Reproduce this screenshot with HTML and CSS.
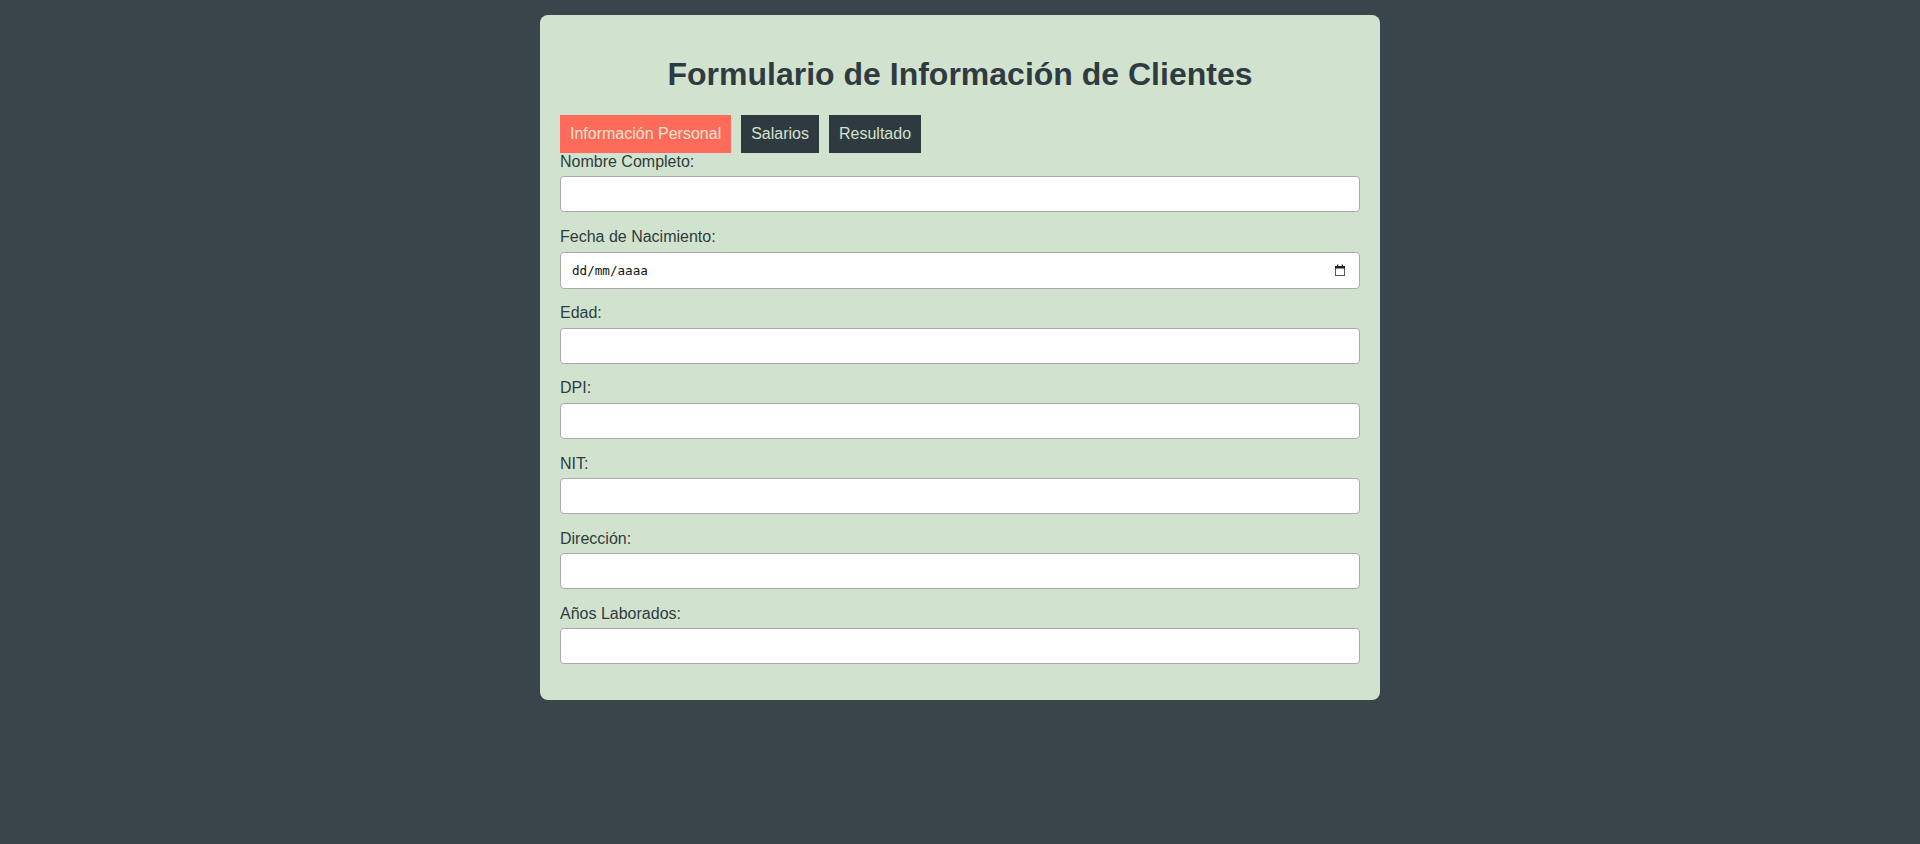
FILE: index.html
```html
<!DOCTYPE html>
<html lang="es">
<head>
<meta charset="utf-8">
<title>Formulario de Información de Clientes</title>
<link rel="stylesheet" href="styles.css">
</head>
<body>
  <div class="container">
    <h1 class="title">Formulario de Información de Clientes</h1>
    <div class="tabs">
      <button class="tab active" type="button">Información Personal</button>
      <button class="tab" type="button">Salarios</button>
      <button class="tab" type="button">Resultado</button>
    </div>
    <form class="form">
      <label class="label" for="nombre">Nombre Completo:</label>
      <input class="field" id="nombre" type="text">

      <label class="label" for="fecha">Fecha de Nacimiento:</label>
      <div class="date-field">
        <input class="field date-input" id="fecha" type="text" placeholder="dd/mm/aaaa">
        <svg class="cal-icon" width="10" height="12" viewBox="0 0 10 12" aria-hidden="true">
          <rect x="0.5" y="2.5" width="9" height="9" fill="none" stroke="#555" stroke-width="1"/>
          <rect x="0" y="2" width="10" height="2.5" fill="#222"/>
          <rect x="2" y="0.5" width="1.2" height="2" fill="#222"/>
          <rect x="6.8" y="0.5" width="1.2" height="2" fill="#222"/>
        </svg>
      </div>

      <label class="label" for="edad">Edad:</label>
      <input class="field" id="edad" type="text">

      <label class="label" for="dpi">DPI:</label>
      <input class="field" id="dpi" type="text">

      <label class="label" for="nit">NIT:</label>
      <input class="field" id="nit" type="text">

      <label class="label" for="direccion">Dirección:</label>
      <input class="field" id="direccion" type="text">

      <label class="label" for="anios">Años Laborados:</label>
      <input class="field" id="anios" type="text">
    </form>
  </div>
</body>
</html>
```
FILE: styles.css
```css
html, body {
  margin: 0;
  padding: 0;
}

body {
  background: #3a454b;
  font-family: "Liberation Sans", Arial, sans-serif;
  font-size: 16px;
  color: #2f3b40;
  padding-top: 15px;
  min-height: 844px;
  box-sizing: border-box;
}

.container {
  width: 800px;
  margin: 0 auto;
  padding: 20px 20px 19.5px;
  background: #d1e3cf;
  border-radius: 8px;
}

.title {
  font-size: 32px;
  font-weight: bold;
  text-align: center;
  color: #2f3b40;
  margin: 21px 0 22px;
  line-height: 37px;
}

.tabs {
  display: flex;
  gap: 10px;
}

.tab {
  font-family: "Liberation Sans", Arial, sans-serif;
  font-size: 16px;
  line-height: 18px;
  padding: 10px;
  border: none;
  border-radius: 0;
  background: #2f3a40;
  color: #d1e3cf;
  cursor: pointer;
}

.tab.active {
  background: #ff6b5b;
  color: #f1e6cf;
}

.form {
  display: flex;
  flex-direction: column;
}

.label {
  display: block;
  line-height: 18.4px;
  margin-bottom: 5px;
  color: #2f3b40;
}

.field {
  display: block;
  width: 100%;
  box-sizing: border-box;
  height: 36px;
  margin: 0 0 15.75px;
  padding: 8px 10px;
  border: 1px solid #aaa;
  border-radius: 4px;
  background: #fff;
  font-family: "Liberation Sans", Arial, sans-serif;
  font-size: 16px;
}

.date-field {
  position: relative;
}

.date-input {
  height: 37px;
  padding-left: 11px;
  font-family: "DejaVu Sans Mono", "Liberation Mono", monospace;
  font-size: 12.6px;
}

.date-input::placeholder {
  color: #111;
  opacity: 1;
}

.cal-icon {
  position: absolute;
  right: 15px;
  top: 12px;
}
```
